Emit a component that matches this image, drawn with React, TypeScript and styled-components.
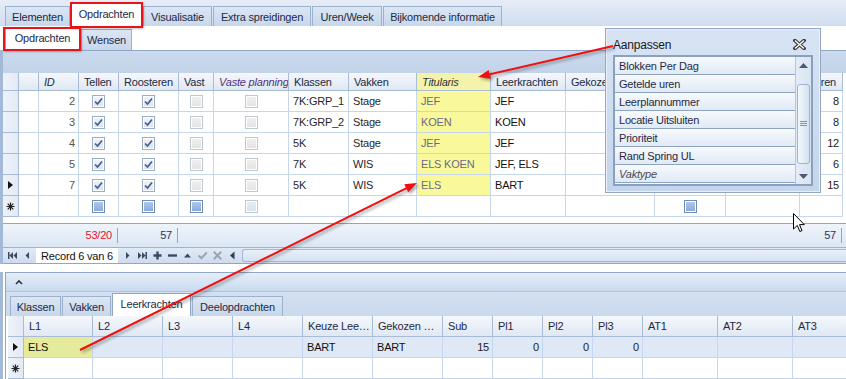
import React from "react";
import styled, { createGlobalStyle } from "styled-components";

const GlobalStyle = createGlobalStyle`
  html, body { margin: 0; padding: 0; background: #fff; }
  body { font-family: "Liberation Sans", Arial, sans-serif; }
`;

const LINE = "#c6d6ec";
const HEAD_LINE = "#a9bcd6";
const DARK_LINE = "#8fa6c6";

const topCols = [16, 20, 40, 40, 60, 35, 75, 60, 68, 74, 75, 89, 71, 74, 43];
const lowCols = [16, 69, 70, 70, 70, 70, 70, 50, 50, 50, 50, 75, 75, 75];

const tpl = (c: number[]) => c.map((w) => w + "px").join(" ");

const Screen = styled.div`
  position: relative;
  width: 846px;
  height: 379px;
  overflow: hidden;
  background: #fff;
  font-family: "Liberation Sans", Arial, sans-serif;
  font-size: 11px;
  letter-spacing: -0.2px;
  color: #1c2433;
  display: flex;
  flex-direction: column;
`;

const TabStrip = styled.div<{ $h: number; $pad: number; $bg: string }>`
  height: ${(p) => p.$h}px;
  flex: none;
  display: flex;
  align-items: flex-end;
  gap: 1px;
  padding-left: ${(p) => p.$pad}px;
  background: ${(p) => p.$bg};
`;

const Tab = styled.div<{ $w: number; $active?: boolean; $h?: number }>`
  width: ${(p) => p.$w}px;
  height: ${(p) => (p.$active ? (p.$h || 20) + 3 : p.$h || 20)}px;
  box-sizing: border-box;
  display: flex;
  align-items: center;
  justify-content: center;
  border: 1px solid ${(p) => (p.$active ? "#8fa6c6" : "#9cb1ce")};
  border-bottom: none;
  background: ${(p) => (p.$active ? "#fff" : "linear-gradient(#dce6f4, #c7d7ec)")};
  color: #1d2b44;
  white-space: nowrap;
  padding-bottom: ${(p) => (p.$active ? 3 : 0)}px;
`;

const Panel = styled.div`
  flex: none;
  display: flex;
  flex-direction: column;
  border-left: 3px solid #a3b9d8;
`;

const GroupBar = styled.div`
  height: 23px;
  box-sizing: border-box;
  border-top: 1px solid ${DARK_LINE};
  background: linear-gradient(#cbdaee, #c2d3e9);
`;

const GridRow = styled.div<{ $cols: number[]; $h: number; $bg?: string }>`
  display: grid;
  grid-template-columns: ${(p) => tpl(p.$cols)};
  height: ${(p) => p.$h}px;
  background: ${(p) => p.$bg || "#fff"};
  flex: none;
`;

const Cell = styled.div<{
  $align?: "left" | "right" | "center";
  $bg?: string;
  $color?: string;
  $italic?: boolean;
}>`
  box-sizing: border-box;
  border-right: 1px solid ${LINE};
  border-bottom: 1px solid ${LINE};
  display: flex;
  align-items: center;
  justify-content: ${(p) =>
    p.$align === "right" ? "flex-end" : p.$align === "center" ? "center" : "flex-start"};
  padding: 0 ${(p) => (p.$align === "right" ? 3 : 4)}px 0 4px;
  overflow: hidden;
  white-space: nowrap;
  background: ${(p) => p.$bg || "transparent"};
  color: ${(p) => p.$color || "#1b1b1b"};
  font-style: ${(p) => (p.$italic ? "italic" : "normal")};
`;

const HeadCell = styled(Cell)`
  border-right-color: ${HEAD_LINE};
  border-bottom-color: ${HEAD_LINE};
  background: ${(p) => p.$bg || "linear-gradient(#f5f8fc, #dfe8f4)"};
  color: ${(p) => p.$color || "#1d2a3f"};
  padding-left: 5px;
  padding-right: ${(p) => (p.$align === "right" ? 6 : 3)}px;
`;

const IndCell = styled(Cell)`
  border-right-color: ${HEAD_LINE};
  border-bottom-color: ${HEAD_LINE};
  background: linear-gradient(90deg, #eef3f9, #e2eaf5);
  justify-content: center;
  padding: 0;
`;

const Spacer = styled.div<{ $h: number }>`
  height: ${(p) => p.$h}px;
  flex: none;
  background: #fff;
`;

const SummaryRow = styled(GridRow)`
  box-sizing: border-box;
  border-top: 1px solid ${DARK_LINE};
  background: linear-gradient(#eff4fb, #dbe6f4);
`;

const SumCell = styled.div`
  display: flex;
  align-items: center;
  justify-content: flex-end;
`;

const SumValue = styled.span<{ $red?: boolean }>`
  height: 15px;
  line-height: 15px;
  padding-right: 5px;
  border-right: 1px solid ${DARK_LINE};
  margin-right: 1px;
  color: ${(p) => (p.$red ? "#e8102e" : "#2b3550")};
`;

const NavBar = styled.div`
  height: 17px;
  box-sizing: border-box;
  flex: none;
  display: flex;
  align-items: stretch;
  padding-left: 2px;
  border-top: 1px solid #9fb3cf;
  border-bottom: 1px solid ${DARK_LINE};
  background: linear-gradient(#e1eaf6, #cfdcee);
`;

const NavBtn = styled.div<{ $gap?: number }>`
  width: 15px;
  flex: none;
  display: flex;
  align-items: center;
  justify-content: center;
  margin-left: ${(p) => p.$gap || 0}px;
`;

const RecordBox = styled.div`
  width: 82px;
  flex: none;
  margin-left: 1px;
  background: #fff;
  display: flex;
  align-items: center;
  justify-content: center;
  font-size: 11px;
  color: #111;
`;

const HScroll = styled.div`
  flex: 1;
  margin: 1px 0 1px 2px;
  border: 1px solid #a5b8d2;
  border-right: none;
  border-radius: 3px 0 0 3px;
  background: linear-gradient(#e9f0f9, #d6e2f1);
`;

const LowerWrap = styled.div`
  flex: none;
  margin-left: 2px;
  border-left: 1px solid ${DARK_LINE};
  display: flex;
  flex-direction: column;
`;

const CollapseBar = styled.div`
  height: 20px;
  box-sizing: border-box;
  border-top: 1px solid ${DARK_LINE};
  border-bottom: 1px solid #b2c5de;
  background: linear-gradient(#e6eef9, #c9daef);
  display: flex;
  align-items: center;
  padding-left: 9px;
`;

const LowerGrid = styled.div`
  margin-left: 2px;
  display: flex;
  flex-direction: column;
`;

/* popup */
const Popup = styled.div`
  position: absolute;
  left: 605px;
  top: 28px;
  width: 216px;
  height: 165px;
  box-sizing: border-box;
  border: 1px solid #91a7c5;
  box-shadow: inset 0 0 0 1px #e9f0f9;
  background: linear-gradient(#d8e4f4, #c4d5eb);
  padding: 0 7px;
  display: flex;
  flex-direction: column;
  z-index: 2;
`;

const PopupTitle = styled.div`
  height: 26px;
  flex: none;
  display: flex;
  align-items: center;
  justify-content: space-between;
  padding: 5px 7px 0 0;
  box-sizing: border-box;
  font-size: 12px;
  letter-spacing: -0.2px;
  color: #1a1a1a;
`;

const ListBox = styled.div`
  height: 131px;
  flex: none;
  box-sizing: border-box;
  border: 2px solid #8aa0bf;
  display: flex;
  background: #e6eef8;
`;

const Items = styled.div`
  flex: 1;
  overflow: hidden;
`;

const Item = styled.div<{ $italic?: boolean }>`
  height: 18px;
  box-sizing: border-box;
  border-bottom: 1px solid #8ea4c3;
  background: linear-gradient(#f7fafd, #e0e9f5);
  display: flex;
  align-items: center;
  padding-left: 4px;
  color: ${(p) => (p.$italic ? "#4a4a55" : "#1f2a44")};
  font-style: ${(p) => (p.$italic ? "italic" : "normal")};
`;

const VScroll = styled.div`
  width: 16px;
  flex: none;
  border-left: 1px solid #b5c6dd;
  background: linear-gradient(90deg, #e4ecf7, #d9e4f2);
  display: flex;
  flex-direction: column;
  align-items: center;
  padding: 6px 0 5px;
  box-sizing: border-box;
`;

const Thumb = styled.div`
  width: 13px;
  height: 80px;
  margin: 16px 0 auto;
  box-sizing: border-box;
  border: 1px solid #9fb3cf;
  border-radius: 3px;
  background: linear-gradient(90deg, #f3f7fc, #d4e1f1);
  display: flex;
  align-items: center;
  justify-content: center;
`;

const RedFrame = styled.div<{ $x: number; $y: number; $w: number; $h: number }>`
  position: absolute;
  left: ${(p) => p.$x}px;
  top: ${(p) => p.$y}px;
  width: ${(p) => p.$w}px;
  height: ${(p) => p.$h}px;
  box-sizing: border-box;
  border: 2px solid #e8141b;
  box-shadow: 1px 1px 2px rgba(0, 0, 0, 0.25);
  z-index: 3;
`;

const Overlay = styled.svg`
  position: absolute;
  left: 0;
  top: 0;
  width: 846px;
  height: 379px;
  pointer-events: none;
  z-index: 4;
  filter: drop-shadow(2px 2px 1.5px rgba(0, 0, 0, 0.35));
`;

const Cursor = styled.svg`
  position: absolute;
  left: 793px;
  top: 213px;
  z-index: 5;
`;

/* small drawings */
type CheckKind = "on" | "off" | "new" | "newOff";

const Box = styled.div<{ $kind: CheckKind }>`
  width: 13px;
  height: 13px;
  box-sizing: border-box;
  border: 1px solid
    ${(p) =>
      p.$kind === "new" ? "#6f8db5" : p.$kind === "on" ? "#9aaec9" : "#bcc8d6"};
  box-shadow: inset 0 0 0 1px #fff;
  background: ${(p) =>
    p.$kind === "new"
      ? "linear-gradient(#b3cbea, #86a8d6)"
      : p.$kind === "on"
      ? "linear-gradient(#f2f5f9, #dbe2eb)"
      : p.$kind === "newOff"
      ? "linear-gradient(#e8edf3, #d9e1eb)"
      : "linear-gradient(#f1f1f1, #e2e2e2)"};
  display: flex;
  align-items: center;
  justify-content: center;
`;

const Check = ({ kind }: { kind: CheckKind }) => (
  <Box $kind={kind}>
    {kind === "on" && (
      <svg width="9" height="9" viewBox="0 0 9 9">
        <path d="M1 4.5 L3.5 7 L8 1.5" fill="none" stroke="#40608e" strokeWidth="1.7" />
      </svg>
    )}
  </Box>
);

const CurrentMark = () => (
  <svg width="5" height="8" viewBox="0 0 5 8">
    <path d="M0 0 L5 4 L0 8 Z" fill="#111" />
  </svg>
);

const NewMark = () => (
  <svg width="9" height="9" viewBox="0 0 9 9" stroke="#222" strokeWidth="1.2">
    <path d="M4.5 0.5 V8.5 M0.5 4.5 H8.5 M1.7 1.7 L7.3 7.3 M7.3 1.7 L1.7 7.3" />
  </svg>
);

const NavIcon = ({ d, color = "#3a4a66" }: { d: string; color?: string }) => (
  <svg width="11" height="11" viewBox="0 0 11 11">
    <path d={d} fill={color} />
  </svg>
);

const StrokeIcon = ({ d, color }: { d: string; color: string }) => (
  <svg width="11" height="11" viewBox="0 0 11 11">
    <path d={d} fill="none" stroke={color} strokeWidth="2" />
  </svg>
);

const arrowHead = (x1: number, y1: number, x2: number, y2: number) => {
  const dx = x2 - x1;
  const dy = y2 - y1;
  const d = Math.hypot(dx, dy);
  const ux = dx / d;
  const uy = dy / d;
  const len = 12;
  const half = 4.5;
  const bx = x2 - ux * len;
  const by = y2 - uy * len;
  return {
    pts: `${x2},${y2} ${bx - uy * half},${by + ux * half} ${bx + uy * half},${by - ux * half}`,
    bx: x2 - ux * (len - 2),
    by: y2 - uy * (len - 2),
  };
};

const Arrow = ({ from, to }: { from: [number, number]; to: [number, number] }) => {
  const h = arrowHead(from[0], from[1], to[0], to[1]);
  return (
    <g>
      <line x1={from[0]} y1={from[1]} x2={h.bx} y2={h.by} stroke="#f01010" strokeWidth="2" />
      <polygon points={h.pts} fill="#f01010" />
    </g>
  );
};

const rows = [
  { id: 2, k: "7K:GRP_1", v: "Stage", t: "JEF", l: "JEF", u: 8 },
  { id: 3, k: "7K:GRP_2", v: "Stage", t: "KOEN", l: "KOEN", u: 8 },
  { id: 4, k: "5K", v: "Stage", t: "JEF", l: "JEF", u: 12 },
  { id: 5, k: "7K", v: "WIS", t: "ELS KOEN", l: "JEF, ELS", u: 6 },
  { id: 7, k: "5K", v: "WIS", t: "ELS", l: "BART", u: 15, cur: true },
];

const popupItems = [
  "Blokken Per Dag",
  "Getelde uren",
  "Leerplannummer",
  "Locatie Uitsluiten",
  "Prioriteit",
  "Rand Spring UL",
];

const YELLOW = "#f9f99c";

export default function App() {
  return (
    <>
      <GlobalStyle />
      <Screen>
        <TabStrip $h={26} $pad={5} $bg="linear-gradient(#e6edf7, #d0ddef)">
          <Tab $w={65}>Elementen</Tab>
          <Tab $w={71} $active>Opdrachten</Tab>
          <Tab $w={69}>Visualisatie</Tab>
          <Tab $w={98}>Extra spreidingen</Tab>
          <Tab $w={70}>Uren/Week</Tab>
          <Tab $w={119}>Bijkomende informatie</Tab>
        </TabStrip>

        <TabStrip $h={24} $pad={5} $bg="#fff">
          <Tab $w={75} $h={20} $active>Opdrachten</Tab>
          <Tab $w={51} $h={21}>Wensen</Tab>
        </TabStrip>

        <Panel>
          <GroupBar />
          <GridRow $cols={topCols} $h={18}>
            <IndCell />
            <HeadCell />
            <HeadCell $italic>ID</HeadCell>
            <HeadCell>Tellen</HeadCell>
            <HeadCell>Roosteren</HeadCell>
            <HeadCell>Vast</HeadCell>
            <HeadCell $italic $color="#55307a">Vaste planning</HeadCell>
            <HeadCell>Klassen</HeadCell>
            <HeadCell>Vakken</HeadCell>
            <HeadCell $italic $bg="#f3f3ac" $color="#333">Titularis</HeadCell>
            <HeadCell>Leerkrachten</HeadCell>
            <HeadCell>Gekozen</HeadCell>
            <HeadCell />
            <HeadCell />
            <HeadCell $align="right">Uren</HeadCell>
          </GridRow>
          {rows.map((r) => (
            <GridRow key={r.id} $cols={topCols} $h={21}>
              <IndCell>{r.cur && <CurrentMark />}</IndCell>
              <Cell />
              <Cell $align="right" $color="#5d524e">{r.id}</Cell>
              <Cell $align="center"><Check kind="on" /></Cell>
              <Cell $align="center"><Check kind="on" /></Cell>
              <Cell $align="center"><Check kind="off" /></Cell>
              <Cell $align="center"><Check kind="off" /></Cell>
              <Cell $color="#2a1f2a">{r.k}</Cell>
              <Cell $color="#2a1f2a">{r.v}</Cell>
              <Cell $bg={YELLOW} $color="#6c6a86">{r.t}</Cell>
              <Cell $color="#111">{r.l}</Cell>
              <Cell />
              <Cell $align="center"><Check kind="off" /></Cell>
              <Cell />
              <Cell $align="right" $color="#222">{r.u}</Cell>
            </GridRow>
          ))}
          <GridRow $cols={topCols} $h={21}>
            <IndCell><NewMark /></IndCell>
            <Cell />
            <Cell />
            <Cell $align="center"><Check kind="new" /></Cell>
            <Cell $align="center"><Check kind="new" /></Cell>
            <Cell $align="center"><Check kind="new" /></Cell>
            <Cell $align="center"><Check kind="newOff" /></Cell>
            <Cell />
            <Cell />
            <Cell />
            <Cell />
            <Cell />
            <Cell $align="center"><Check kind="new" /></Cell>
            <Cell />
            <Cell />
          </GridRow>
          <Spacer $h={6} />
          <SummaryRow $cols={topCols} $h={24}>
            <div />
            <div />
            <div />
            <SumCell><SumValue $red>53/20</SumValue></SumCell>
            <SumCell><SumValue>57</SumValue></SumCell>
            {Array.from({ length: 9 }).map((_, i) => (
              <div key={i} />
            ))}
            <SumCell><SumValue>57</SumValue></SumCell>
          </SummaryRow>
          <NavBar>
            <NavBtn><NavIcon d="M1 2 H2.5 V9 H1 Z M6 2 V9 L2.5 5.5 Z M10 2 V9 L6.5 5.5 Z" /></NavBtn>
            <NavBtn><NavIcon d="M7 2 V9 L3.5 5.5 Z" /></NavBtn>
            <RecordBox>Record 6 van 6</RecordBox>
            <NavBtn $gap={2}><NavIcon d="M4 2 V9 L7.5 5.5 Z" /></NavBtn>
            <NavBtn><NavIcon d="M1 2 V9 L4.5 5.5 Z M5 2 V9 L8.5 5.5 Z M8.5 2 H10 V9 H8.5 Z" /></NavBtn>
            <NavBtn><NavIcon d="M4.3 1.5 H6.7 V4.3 H9.5 V6.7 H6.7 V9.5 H4.3 V6.7 H1.5 V4.3 H4.3 Z" /></NavBtn>
            <NavBtn><NavIcon d="M1 4.3 H10 V6.7 H1 Z" /></NavBtn>
            <NavBtn><NavIcon d="M2 7.5 L5.5 3.5 L9 7.5 Z" /></NavBtn>
            <NavBtn><StrokeIcon d="M1.5 5.5 L4.3 8.3 L9.8 2.5" color="#9aa4b2" /></NavBtn>
            <NavBtn><StrokeIcon d="M1.8 1.8 L9.2 9.2 M9.2 1.8 L1.8 9.2" color="#9aa4b2" /></NavBtn>
            <NavBtn><NavIcon d="M7.5 1.5 V9.5 L3 5.5 Z" color="#2f3d55" /></NavBtn>
            <HScroll />
          </NavBar>
        </Panel>

        <Spacer $h={8} />

        <Panel>
          <LowerWrap>
            <CollapseBar>
              <svg width="8" height="6" viewBox="0 0 8 6">
                <path d="M1 5 L4 2 L7 5" fill="none" stroke="#2b3346" strokeWidth="1.6" />
              </svg>
            </CollapseBar>
            <TabStrip $h={24} $pad={4} $bg="linear-gradient(#d3e0f1, #cbd9ed)">
              <Tab $w={51}>Klassen</Tab>
              <Tab $w={49}>Vakken</Tab>
              <Tab $w={79} $active>Leerkrachten</Tab>
              <Tab $w={91}>Deelopdrachten</Tab>
            </TabStrip>
            <LowerGrid>
              <GridRow $cols={lowCols} $h={21}>
                <IndCell />
                <HeadCell>L1</HeadCell>
                <HeadCell>L2</HeadCell>
                <HeadCell>L3</HeadCell>
                <HeadCell>L4</HeadCell>
                <HeadCell>Keuze Lee…</HeadCell>
                <HeadCell>Gekozen …</HeadCell>
                <HeadCell>Sub</HeadCell>
                <HeadCell>Pl1</HeadCell>
                <HeadCell>Pl2</HeadCell>
                <HeadCell>Pl3</HeadCell>
                <HeadCell>AT1</HeadCell>
                <HeadCell>AT2</HeadCell>
                <HeadCell>AT3</HeadCell>
              </GridRow>
              <GridRow $cols={lowCols} $h={21} $bg="#dfe8f5">
                <IndCell><CurrentMark /></IndCell>
                <Cell $bg="#e5ea9d" $color="#111">ELS</Cell>
                <Cell />
                <Cell />
                <Cell />
                <Cell $color="#111">BART</Cell>
                <Cell $color="#111">BART</Cell>
                <Cell $align="right" $color="#222">15</Cell>
                <Cell $align="right" $color="#222">0</Cell>
                <Cell $align="right" $color="#222">0</Cell>
                <Cell $align="right" $color="#222">0</Cell>
                <Cell />
                <Cell />
                <Cell />
              </GridRow>
              <GridRow $cols={lowCols} $h={21}>
                <IndCell><NewMark /></IndCell>
                {Array.from({ length: 13 }).map((_, i) => (
                  <Cell key={i} />
                ))}
              </GridRow>
            </LowerGrid>
          </LowerWrap>
        </Panel>

        <Popup>
          <PopupTitle>
            <span>Aanpassen</span>
            <svg width="13" height="11" viewBox="0 0 13 11">
              <path d="M2 1.5 L11 9.5 M11 1.5 L2 9.5" stroke="#3a3a3a" strokeWidth="3.6" strokeLinecap="square" />
              <path d="M2 1.5 L11 9.5 M11 1.5 L2 9.5" stroke="#fff" strokeWidth="1.4" />
            </svg>
          </PopupTitle>
          <ListBox>
            <Items>
              {popupItems.map((t) => (
                <Item key={t}>{t}</Item>
              ))}
              <Item $italic>Vaktype</Item>
              <Item />
            </Items>
            <VScroll>
              <svg width="9" height="5" viewBox="0 0 9 5">
                <path d="M0 5 L4.5 0 L9 5 Z" fill="#4a5a74" />
              </svg>
              <Thumb>
                <svg width="7" height="6" viewBox="0 0 7 6" stroke="#8394ad" strokeWidth="1">
                  <path d="M0 0.5 H7 M0 2.5 H7 M0 4.5 H7" />
                </svg>
              </Thumb>
              <svg width="9" height="5" viewBox="0 0 9 5">
                <path d="M0 0 L9 0 L4.5 5 Z" fill="#4a5a74" />
              </svg>
            </VScroll>
          </ListBox>
        </Popup>

        <RedFrame $x={70} $y={2} $w={73} $h={26} />
        <RedFrame $x={3} $y={27} $w={78} $h={24} />

        <Overlay viewBox="0 0 846 379">
          <Arrow from={[613, 46]} to={[478, 77]} />
          <Arrow from={[80, 350]} to={[417, 183]} />
        </Overlay>

        <Cursor width="12" height="20" viewBox="0 0 12 20">
          <path
            d="M0.5 0.5 L0.5 16 L4.3 12.4 L6.8 18.5 L9 17.6 L6.5 11.6 L11.3 11.6 Z"
            fill="#fff"
            stroke="#000"
            strokeWidth="1"
          />
        </Cursor>
      </Screen>
    </>
  );
}
